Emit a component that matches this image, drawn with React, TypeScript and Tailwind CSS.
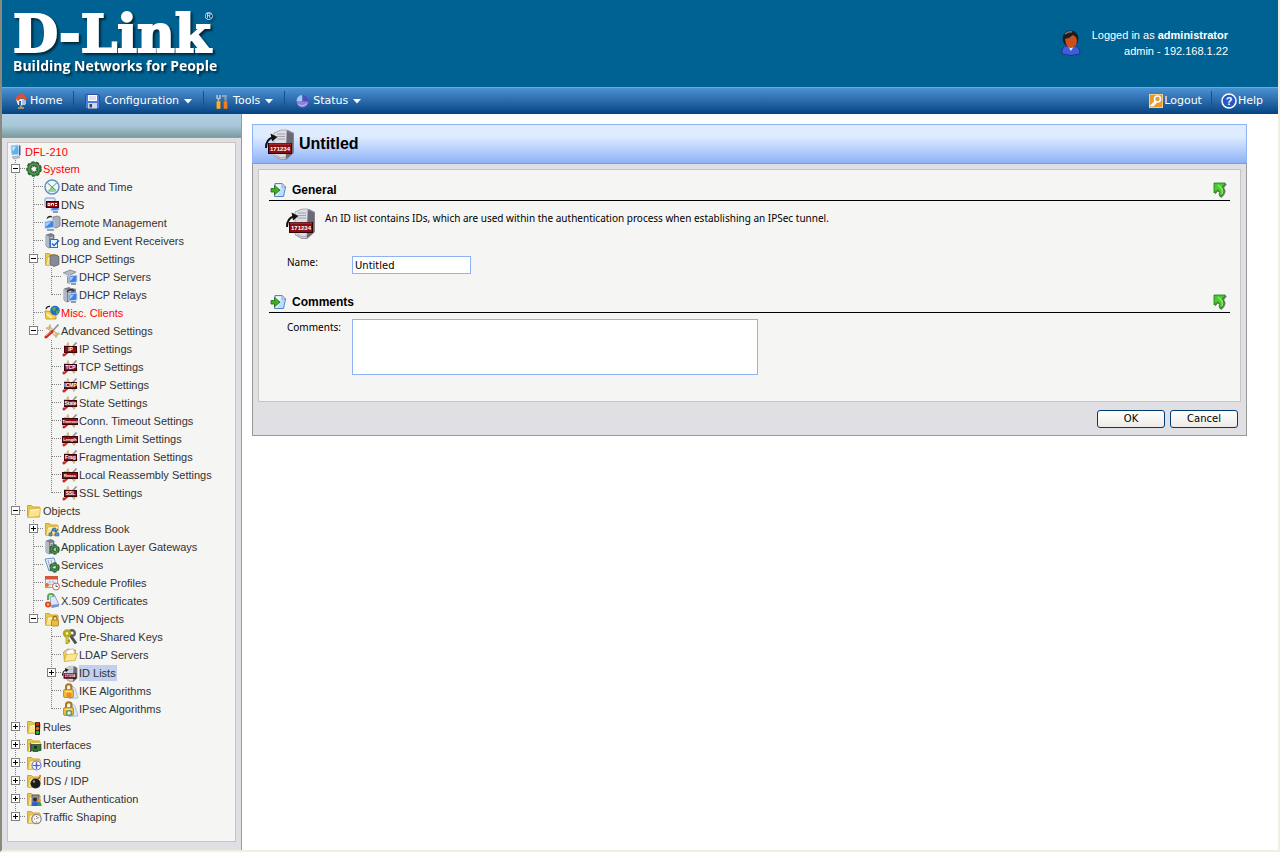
import { useState } from "react";
import type { ReactNode } from "react";

interface TreeNode {
  label: string;
  icon: ReactNode;
  alert?: boolean;
  selected?: boolean;
  closed?: boolean;
  children?: TreeNode[];
}

/* ---------- Icon parts ---------- */

const Folder = () => (
  <>
    <path d="M1.500 2.500h4l1.500 1.500h6.500v10h-12z" fill="#e8c64c" stroke="#cfa63a" />
    <path d="M2 14.500l1.500-8.500 11-1-1 8.500z" fill="#fbe58c" stroke="#d9ae3c" strokeWidth=".7" />
    <path d="M4 7.500l9-1" stroke="#fff8cf" />
  </>
);

const Server = () => (
  <>
    <path d="M2 2l5-1.500 3 1.500v11l-5 2-3-2z" fill="#7d8593" stroke="#4f5665" strokeWidth=".6" />
    <path d="M2 2l3 1.500v11.500l-3-2z" fill="#b3b9c4" />
    <path d="M6 5l3-1M6 7l3-1" stroke="#dfe3ea" strokeWidth=".8" />
  </>
);

const Monitor = () => (
  <>
    <path d="M7 7l8-1v7l-8 1z" fill="#3f7fe0" stroke="#c8d8f2" />
    <path d="M8 8l4-.5-3 4h-1z" fill="#9cc8ff" />
    <path d="M9 15h5" stroke="#6f7c92" strokeWidth="1.500" />
  </>
);

const Gear = ({ cx, cy, r, width }: { cx: number; cy: number; r: number; width: number }) => (
  <>
    <circle cx={cx} cy={cy} r={r} stroke="#2b6330" strokeWidth={width + 1.6} strokeDasharray="2.2 1.300" />
    <circle cx={cx} cy={cy} r={r} stroke="#2f6d34" strokeWidth={width} />
    <circle cx={cx} cy={cy} r={r} stroke="#5f9a5f" strokeWidth={width / 3} />
  </>
);

const WrenchAndDriver = () => (
  <>
    <path d="M4.500 4l8.500 9" stroke="#a9a18a" strokeWidth="3.600" />
    <path d="M4.500 4l8.500 9" stroke="#ecdfb0" strokeWidth="2.400" />
    <path d="M2 5l3.500.5.500-4M15.500 11l-3-.500-.500 4" stroke="#cdbb7a" strokeWidth="2" />
    <path d="M14.500 1.500l-6 6.500" stroke="#8f929c" strokeWidth="1.800" />
    <path d="M8 8.500l-6 5.500" stroke="#d3261b" strokeWidth="3" strokeLinecap="round" />
    <path d="M7 8.500l-5 4.500" stroke="#f58a7a" />
  </>
);

const Lock = () => (
  <>
    <path d="M9 2l4 3 3 10-9 .5z" fill="#dbe9f8" stroke="#8fa6c4" strokeWidth=".6" />
    <path d="M4 7v-3a2.500 2.500 0 0 1 5.500 0v3" stroke="#a9761b" strokeWidth="2" />
    <rect x="1.500" y="6.500" width="10" height="8" rx="1.500" fill="#edbb42" stroke="#a9761b" strokeWidth=".7" />
    <path d="M3.500 8.500h6" stroke="#ffeaa0" />
  </>
);

const Icon = ({ children }: { children: ReactNode }) => (
  <svg width="17" height="16" viewBox="0 0 17 16" fill="none" className="shrink-0" aria-hidden="true">
    {children}
  </svg>
);

const PlateIcon = ({ text, wide = false }: { text: string; wide?: boolean }) => (
  <Icon>
    <WrenchAndDriver />
    <rect
      x={wide ? 0.5 : 2.5}
      y="5.500"
      width={wide ? 15 : 12}
      height="6"
      fill="#960a10"
      stroke="#3b0507"
    />
    <text
      x={wide ? 8 : 8.5}
      y="10.300"
      textAnchor="middle"
      fontSize={wide ? 4 : 5}
      fontWeight="bold"
      fill="#fff"
      fontFamily="Liberation Sans, sans-serif"
    >
      {text}
    </text>
  </Icon>
);

const IdListIcon = ({ size = 32 }: { size?: number }) => (
  <svg width={size} height={size} viewBox="0 0 32 32" fill="none" className="shrink-0" aria-hidden="true">
    <path d="M9 5l7-3h7l6 3v20l-8 7h-5l-7-4z" fill="#85858f" />
    <path d="M9 5l7-3h6l-1 29-5 .5-7-4z" fill="#dcdce4" stroke="#9a9aa6" strokeWidth=".7" />
    <path d="M22 3l6 3v19l-7 6z" fill="#6a6a76" />
    <path d="M12 6h8M12 8.500h8M12 11h8" stroke="#a2a2b0" />
    <path d="M1 20q0-9 7-10.500" stroke="#111" strokeWidth="2" />
    <path d="M5.500 5.500l7 3.500-5.500 4.500z" fill="#111" />
    <rect x="3.500" y="15.500" width="23" height="10" fill="#8b0d10" stroke="#2d0304" />
    <path d="M4 16h22" stroke="#c4504f" strokeWidth=".8" />
    <text
      x="15"
      y="23"
      textAnchor="middle"
      fontSize="6"
      fontWeight="bold"
      fill="#fff"
      fontFamily="Liberation Sans, sans-serif"
    >
      171234
    </text>
    <path d="M11 27l5 3 5-1" stroke="#a6a6b2" />
  </svg>
);

const deviceIcon = (
  <svg width="14" height="16" viewBox="0 0 14 16" fill="none" aria-hidden="true">
    <path d="M3 2l7-1 1 9-7 1z" fill="#5cb1ef" stroke="#b3cbe6" />
    <path d="M4 3l4-.5-3 5z" fill="#c9ecff" />
    <path d="M11 1l1.500 1v9l-1.500 1z" fill="#4a5f93" />
    <path d="M4 13l6-1 2 1.500-6 1.500z" fill="#c4cfdf" stroke="#7b8ba8" strokeWidth=".6" />
  </svg>
);

const folderWith = (extra: ReactNode) => (
  <Icon>
    <Folder />
    {extra}
  </Icon>
);

const gearIcon = (
  <Icon>
    <Gear cx={8} cy={8} r={5} width={4} />
  </Icon>
);

const clockIcon = (
  <Icon>
    <circle cx="8" cy="8" r="7" fill="#eef7f4" stroke="#5f93c4" strokeWidth="1.500" />
    <path d="M8 8l-4 5h8z" fill="#9ad68f" />
    <path d="M3.500 4l4.500 4 4 3.500" stroke="#3f78b4" />
    <path d="M12.500 4l-8 8" stroke="#5d9a5c" />
  </Icon>
);

const dnsIcon = (
  <Icon>
    <rect x="1" y="1" width="10" height="9" rx="1" fill="#e2ecfa" stroke="#7796c6" />
    <Monitor />
    <rect x="2.500" y="4.500" width="12" height="6" fill="#8e0f12" stroke="#3b0507" />
    <path d="M4 6.500h2v2h-2zM7.500 8.500v-2h2v2M11 6.500h2M11 8.500h2" stroke="#fff" />
  </Icon>
);

const remoteIcon = (
  <Icon>
    <path d="M9 2l4-1 3 1v9l-4 2-3-1z" fill="#a9afbc" stroke="#6b7282" strokeWidth=".7" />
    <path d="M1 6.500l9-1v7l-9 1z" fill="#3f86e4" stroke="#c3d5ef" />
    <path d="M2 7.500l5-.5-4 4h-1z" fill="#a8d1ff" />
    <path d="M3 3.500q2-3 5-1.500" stroke="#222" strokeWidth="1.300" />
    <path d="M3 15h7" stroke="#7d899e" strokeWidth="1.500" />
  </Icon>
);

const logIcon = (
  <Icon>
    <Server />
    <rect x="6.500" y="6.500" width="7" height="8" fill="#e9f3ff" stroke="#3471c4" />
    <path d="M8 10.500l2 2 5-5" stroke="#2468c8" strokeWidth="1.500" />
  </Icon>
);

const dhcpServersIcon = (
  <Icon>
    <path d="M1 4l7-3 6 2-7 4z" fill="#b7b9bf" stroke="#6f7279" strokeWidth=".7" />
    <path d="M1 4l6 3v2l-6-3z" fill="#e6e7ea" />
    <path d="M5 7v7l3 1v-7z" fill="#8d95a3" />
    <Monitor />
  </Icon>
);

const dhcpRelaysIcon = (
  <Icon>
    <Server />
    <path d="M10 1l4 1v6l-4-1z" fill="#777e8d" />
    <path d="M5 5q3-4 7-1" stroke="#222" strokeWidth="1.300" />
    <Monitor />
  </Icon>
);

const miscIcon = (
  <Icon>
    <path d="M1 6h4l1 1h6v7h-10z" fill="#f6cf45" stroke="#b88a1c" strokeWidth=".8" />
    <circle cx="11" cy="5.500" r="4.800" fill="#2a6cc9" />
    <path d="M8 3q3-2 4 0l-1 3-2 0zM12 6l3-1-1 4-2 0z" fill="#55ab4c" />
    <path d="M2 4q1-3 4-2.500" stroke="#222" strokeWidth="1.300" />
    <path d="M3 9l5 4" stroke="#fff0a8" strokeWidth="2" />
  </Icon>
);

const gatewayIcon = (
  <Icon>
    <Server />
    <Gear cx={10.5} cy={10.5} r={3.2} width={2.5} />
  </Icon>
);

const servicesIcon = (
  <Icon>
    <path d="M1 2l9-1 3 10-8 3z" fill="#e5f0fb" stroke="#6a93c8" />
    <path d="M4 3l2 8M7 3l2 7" stroke="#9a9fd0" />
    <Gear cx={10.5} cy={10.5} r={3.2} width={2.5} />
  </Icon>
);

const scheduleIcon = (
  <Icon>
    <rect x="1.500" y="1.500" width="12" height="11" fill="#f6f8fc" stroke="#8ea4c8" />
    <rect x="1" y="1" width="13" height="3.500" fill="#d7553b" />
    <path d="M3 7h9M3 9.500h9M6 5v7M9 5v7" stroke="#a7b7d4" strokeWidth=".8" />
    <circle cx="3" cy="10" r="2" fill="#e8701f" />
    <circle cx="12" cy="11.500" r="3.500" fill="#fff" stroke="#d35f35" />
    <path d="M12 9.500v2h2" stroke="#444" strokeWidth=".8" />
  </Icon>
);

const certificateIcon = (
  <Icon>
    <path d="M4 7v-3a3 3 0 0 1 6 0v4" stroke="#56ad48" strokeWidth="2" />
    <path d="M6 4l5-1 4 9-8 2z" fill="#dfe7fa" stroke="#7a8fc0" strokeWidth=".8" />
    <path d="M7 12l8-1v2.500l-7 1.500z" fill="#7f92c9" />
    <circle cx="4" cy="11.500" r="3" fill="#d9482b" />
    <circle cx="4" cy="11.500" r="1.200" fill="#f7c24d" />
  </Icon>
);

const keysIcon = (
  <Icon>
    <path d="M8 6l6 8.500" stroke="#4c4f4a" strokeWidth="3" />
    <circle cx="10" cy="4" r="2.800" stroke="#60635c" strokeWidth="2.400" />
    <circle cx="5" cy="4.500" r="2.800" fill="#f5ee9f" stroke="#b1a91d" strokeWidth="2.800" />
    <path d="M5 7v8M5 12h3" stroke="#a59c17" strokeWidth="2.800" />
    <path d="M5 7v7" stroke="#e3da47" strokeWidth="1.200" />
  </Icon>
);

const ldapIcon = (
  <Icon>
    <path d="M1.500 5l4-3 8 1v9l-11 2z" fill="#f3cd58" stroke="#bf9630" strokeWidth=".8" />
    <path d="M4 4l7-2.500 2 6-8 3z" fill="#fff" stroke="#a8b7cc" strokeWidth=".7" />
    <path d="M2 14.500l2.500-7 11-1-2.500 7z" fill="#fce98e" stroke="#d0a63c" strokeWidth=".7" />
  </Icon>
);

/* ---------- Tree data ---------- */

const treeNodes: TreeNode[] = [
  {
    label: "System",
    icon: gearIcon,
    alert: true,
    children: [
      { label: "Date and Time", icon: clockIcon },
      { label: "DNS", icon: dnsIcon },
      { label: "Remote Management", icon: remoteIcon },
      { label: "Log and Event Receivers", icon: logIcon },
      {
        label: "DHCP Settings",
        icon: folderWith(<path d="M6 4.500l4-1 5 2v8l-5 2-4-2z" fill="#868a94" stroke="#4d525e" strokeWidth=".6" />),
        children: [
          { label: "DHCP Servers", icon: dhcpServersIcon },
          { label: "DHCP Relays", icon: dhcpRelaysIcon },
        ],
      },
      { label: "Misc. Clients", icon: miscIcon, alert: true },
      {
        label: "Advanced Settings",
        icon: (
          <Icon>
            <WrenchAndDriver />
          </Icon>
        ),
        children: [
          { label: "IP Settings", icon: <PlateIcon text="IP" /> },
          { label: "TCP Settings", icon: <PlateIcon text="TCP" /> },
          { label: "ICMP Settings", icon: <PlateIcon text="ICMP" /> },
          { label: "State Settings", icon: <PlateIcon text="State" /> },
          { label: "Conn. Timeout Settings", icon: <PlateIcon text="Timeout" wide /> },
          { label: "Length Limit Settings", icon: <PlateIcon text="Length" wide /> },
          { label: "Fragmentation Settings", icon: <PlateIcon text="Frag" /> },
          { label: "Local Reassembly Settings", icon: <PlateIcon text="Reass" wide /> },
          { label: "SSL Settings", icon: <PlateIcon text="SSL" /> },
        ],
      },
    ],
  },
  {
    label: "Objects",
    icon: folderWith(null),
    children: [
      {
        label: "Address Book",
        icon: folderWith(
          <>
            <path d="M6 14l3-6 3 3 2-3" stroke="#2c6fb8" strokeWidth="1.300" />
            <path d="M5 12h3v3h-3zM11 12h4v3h-4zM9 7h3v3h-3z" fill="#4f9be0" stroke="#2a527f" strokeWidth=".5" />
          </>
        ),
        closed: true,
        children: [],
      },
      { label: "Application Layer Gateways", icon: gatewayIcon },
      { label: "Services", icon: servicesIcon },
      { label: "Schedule Profiles", icon: scheduleIcon },
      { label: "X.509 Certificates", icon: certificateIcon },
      {
        label: "VPN Objects",
        icon: folderWith(
          <>
            <path d="M9 9v-1.500a2 2 0 0 1 4 0v1.500" stroke="#96701c" strokeWidth="1.300" />
            <rect x="7.500" y="9" width="7" height="6" rx="1" fill="#efbd3e" stroke="#96701c" strokeWidth=".7" />
          </>
        ),
        children: [
          { label: "Pre-Shared Keys", icon: keysIcon },
          { label: "LDAP Servers", icon: ldapIcon },
          {
            label: "ID Lists",
            icon: <IdListIcon size={17} />,
            selected: true,
            closed: true,
            children: [],
          },
          {
            label: "IKE Algorithms",
            icon: (
              <Icon>
                <Lock />
                <circle cx="7" cy="12" r="2.500" fill="#f08a1f" />
              </Icon>
            ),
          },
          {
            label: "IPsec Algorithms",
            icon: (
              <Icon>
                <Lock />
                <circle cx="7" cy="12" r="2.500" fill="#e5f3e2" stroke="#5d9e70" strokeWidth="1.500" />
              </Icon>
            ),
          },
        ],
      },
    ],
  },
  {
    label: "Rules",
    icon: folderWith(
      <>
        <rect x="9" y="3" width="5" height="13" rx="1" fill="#222" />
        <circle cx="11.500" cy="5" r="1.700" fill="#e02a1d" />
        <circle cx="11.500" cy="9.500" r="1.700" fill="#d4741a" />
        <circle cx="11.500" cy="13.500" r="1.700" fill="#28b52c" />
      </>
    ),
    closed: true,
    children: [],
  },
  {
    label: "Interfaces",
    icon: folderWith(
      <>
        <rect x="5" y="7.500" width="10" height="6" fill="#2e7a3c" stroke="#1b4724" strokeWidth=".7" />
        <path d="M4.500 6v9M7 14.500h5" stroke="#555" />
        <path d="M8 9h3v2.500h-3z" fill="#1d2b20" />
      </>
    ),
    closed: true,
    children: [],
  },
  {
    label: "Routing",
    icon: folderWith(
      <>
        <circle cx="10.500" cy="10.500" r="4.500" fill="#eef0ff" stroke="#7280cf" strokeWidth="1.200" />
        <path d="M10.500 7v7M7 10.500h7" stroke="#5361bd" strokeWidth="1.200" />
        <circle cx="10.500" cy="10.500" r="1.200" fill="#5361bd" />
      </>
    ),
    closed: true,
    children: [],
  },
  {
    label: "IDS / IDP",
    icon: folderWith(
      <>
        <circle cx="9.500" cy="10.500" r="5" fill="#1c1c1c" />
        <circle cx="8" cy="8.500" r="1.200" fill="#8f8f8f" />
        <path d="M12 6.500l2-3" stroke="#7a5c35" strokeWidth="1.300" />
        <circle cx="14" cy="3" r="1.200" fill="#f27a3a" />
      </>
    ),
    closed: true,
    children: [],
  },
  {
    label: "User Authentication",
    icon: folderWith(
      <>
        <rect x="6" y="4" width="7" height="9" fill="#8791a5" stroke="#48536b" strokeWidth=".7" />
        <circle cx="9" cy="8.500" r="2" fill="#3b241c" />
        <path d="M5.500 15q0-4.500 3.500-4.500t3.500 4.500z" fill="#2c5fd0" />
        <circle cx="13.500" cy="9.500" r="1.500" fill="#e69a3b" />
        <path d="M11.500 15q0-4 2-4t2 4z" fill="#3a9a45" />
      </>
    ),
    closed: true,
    children: [],
  },
  {
    label: "Traffic Shaping",
    icon: folderWith(
      <>
        <circle cx="10.500" cy="10" r="4.700" fill="#f5f5f5" stroke="#8d8d8d" strokeWidth="1.300" />
        <path d="M10.500 10l2-2" stroke="#c23a2a" />
        <path d="M8 10h1M10.500 7v1M10.500 12.500v1" stroke="#555" strokeWidth=".8" />
      </>
    ),
    closed: true,
    children: [],
  },
];

/* ---------- Tree ---------- */

const Rail = ({ line }: { line: boolean }) => (
  <svg width="18" height="18" className="shrink-0" aria-hidden="true">
    {line && <path d="M7.500 0v18" stroke="#808080" strokeDasharray="1 1" />}
  </svg>
);

const Joint = ({ last, box, open }: { last: boolean; box: boolean; open: boolean }) => (
  <svg width="18" height="18" className="block shrink-0" fill="none" aria-hidden="true">
    <path d={last ? "M7.500 0v9" : "M7.500 0v18"} stroke="#808080" strokeDasharray="1 1" />
    <path d="M8 8.500h10" stroke="#808080" strokeDasharray="1 1" />
    {box && (
      <>
        <rect x="3.500" y="4.500" width="8" height="8" fill="#fff" stroke="#808080" />
        <path d={open ? "M5 8.500h5" : "M5 8.500h5M7.500 6v5"} stroke="#000" />
      </>
    )}
  </svg>
);

function TreeRow({ node, rails, last }: { node: TreeNode; rails: boolean[]; last: boolean }) {
  const [open, setOpen] = useState(!node.closed);

  return (
    <li>
      <div className="flex h-[18px] items-center">
        {rails.map((line, index) => (
          <Rail key={index} line={line} />
        ))}
        {node.children ? (
          <button
            type="button"
            className="shrink-0"
            aria-label={`${open ? "Collapse" : "Expand"} ${node.label}`}
            onClick={() => setOpen(!open)}
          >
            <Joint last={last} box open={open} />
          </button>
        ) : (
          <Joint last={last} box={false} open={false} />
        )}
        {node.icon}
        <a
          href="#"
          className={`whitespace-nowrap leading-4 ${node.selected ? "bg-[#c1d0ee] pr-px" : ""} ${
            node.alert ? "text-[#ff0000]" : "text-[#333333]"
          }`}
        >
          {node.label}
        </a>
      </div>
      {open && node.children && node.children.length > 0 && (
        <ul>
          {node.children.map((child, index) => (
            <TreeRow
              key={child.label}
              node={child}
              rails={[...rails, !last]}
              last={index === node.children!.length - 1}
            />
          ))}
        </ul>
      )}
    </li>
  );
}

function Sidebar() {
  return (
    <aside className="flex w-60 shrink-0 flex-col border-r border-[#999999] bg-[#e0dfe4]">
      <div className="h-6 border-b border-[#999999] bg-linear-to-b from-[#b1cfe3] via-[#a9c8d8] to-[#7c9ca0]" />
      <nav
        className="mx-[5px] mt-1 mb-2 flex-1 border border-[#c6c6be] bg-[#f5f5f3] font-['Liberation_Sans',Arial,sans-serif] text-[11px]"
        aria-label="Device tree"
      >
        <div className="flex h-[17px] items-end gap-[3px]">
          {deviceIcon}
          <a href="#" className="leading-4 text-[#ff0000]">
            DFL-210
          </a>
        </div>
        <ul>
          {treeNodes.map((node, index) => (
            <TreeRow key={node.label} node={node} rails={[]} last={index === treeNodes.length - 1} />
          ))}
        </ul>
      </nav>
    </aside>
  );
}

/* ---------- Header and menu bar ---------- */

function Header() {
  return (
    <header className="flex h-[87px] items-start justify-between bg-[#006293] pr-[50px] pl-[11px] text-white">
      <div className="pt-[10px] drop-shadow-[2px_2px_1px_rgba(0,0,0,0.6)]">
        <div className="flex h-12 items-start font-['DejaVu_Serif',serif]">
          <span className="text-[52px] leading-12 font-bold [-webkit-text-stroke:2px_white]">D-Link</span>
          <span className="-ml-[6px] font-['Liberation_Sans',Arial,sans-serif] text-[11px] leading-3">®</span>
        </div>
        <div className="font-['Open_Sans',sans-serif] text-[14px] leading-4 font-bold whitespace-nowrap">
          Building Networks for People
        </div>
      </div>
      <div className="flex items-center gap-[7px] pt-[27px] font-['Liberation_Sans',Arial,sans-serif] text-[11px]">
        <svg width="20" height="26" viewBox="0 0 20 26" fill="none" className="mr-1" aria-hidden="true">
          <path d="M1 24q-1-8 5-8h7q6 0 6 8-9 3-18 0z" fill="#3b5fd6" stroke="#1d3190" />
          <path d="M7 16l3 5 3-5z" fill="#e8eeff" />
          <circle cx="9.500" cy="8.500" r="8" fill="#1d1d1f" />
          <path d="M4 9q5-1 8-4 4 2 4 6-1 7-6 7t-6-9z" fill="#c8501c" />
          <path d="M4 4q4-3 7-2" stroke="#77777c" strokeWidth="1.500" />
        </svg>
        <div className="text-right leading-4">
          <p>
            Logged in as <b>administrator</b>
          </p>
          <p>admin - 192.168.1.22</p>
        </div>
      </div>
    </header>
  );
}

const Divider = () => <span className="mt-[3px] h-[14px] w-px self-start bg-[#07549a]" />;

const Caret = () => (
  <svg width="8" height="5" viewBox="0 0 8 5" className="ml-px" aria-hidden="true">
    <path d="M0 0h8l-4 4.500z" fill="#fff" />
  </svg>
);

function MenuBar() {
  return (
    <nav className="flex h-[27px] items-center justify-between border-t border-[#8aa3b5] bg-linear-to-b from-[#4b92d3] to-[#044482] pr-[15px] pl-3 font-['DejaVu_Sans',Verdana,sans-serif] text-[11px] text-white">
      <div className="flex h-full items-center gap-[11px]">
        <a href="#" className="flex items-center gap-[2px]">
          <svg width="14" height="16" viewBox="0 0 14 16" fill="none" aria-hidden="true">
            <path d="M7 11v4M4 15h6" stroke="#c9a35a" strokeWidth="1.500" />
            <path d="M2 6h9v6h-7z" fill="#f4f6fb" />
            <path d="M8 6l4 1v4l-4 1.500z" fill="#a9c3e6" />
            <path d="M1 5l4-3.500 4-1 4 5.500-2 1.500-3-3-4 3.500z" fill="#e0512a" />
            <path d="M5 8h2v4h-2z" fill="#2f6db5" />
          </svg>
          Home
        </a>
        <Divider />
        <button type="button" className="flex items-center gap-1">
          <svg width="15" height="15" viewBox="0 0 15 15" fill="none" aria-hidden="true">
            <rect x=".5" y=".5" width="14" height="14" rx="1" fill="#4a7fe0" stroke="#2a4da8" />
            <rect x="3" y="1" width="9" height="6" fill="#fff" />
            <path d="M4 3h7M4 5h7" stroke="#b8c4dc" />
            <rect x="3" y="9" width="9" height="5.500" fill="#cfd6e6" />
            <rect x="4.500" y="10" width="2.500" height="3.500" fill="#31456f" />
          </svg>
          Configuration
          <Caret />
        </button>
        <Divider />
        <button type="button" className="flex items-center gap-1">
          <svg width="14" height="15" viewBox="0 0 14 15" fill="none" aria-hidden="true">
            <path d="M2 1v3l1.500 1 1.500-1v-3M3.500 5v4" stroke="#b9c9d9" strokeWidth="1.500" />
            <path d="M7 2h5M10.500 2v7" stroke="#8fa3b6" strokeWidth="2" />
            <rect x="1.500" y="7" width="4" height="8" rx="1" fill="#f0b13a" stroke="#a9701d" strokeWidth=".5" />
            <rect x="8.500" y="7" width="4" height="8" rx="1" fill="#ef7d2a" stroke="#9c4a17" strokeWidth=".5" />
          </svg>
          Tools
          <Caret />
        </button>
        <Divider />
        <button type="button" className="flex items-center gap-1">
          <svg width="13" height="14" viewBox="0 0 13 14" fill="none" aria-hidden="true">
            <circle cx="6.500" cy="7.500" r="6" fill="#8c83dd" stroke="#5c55b8" />
            <path d="M6.500 7.500v-6a6 6 0 0 1 6 6z" fill="#4b4fc0" />
            <path d="M6 7v-6a6 6 0 0 0-5.500 6z" fill="#8fd0f5" />
            <path d="M2 10q4 4 9-.5" stroke="#c8c2f5" />
          </svg>
          Status
          <Caret />
        </button>
      </div>
      <div className="flex h-full items-center gap-[9px]">
        <a href="#" className="flex items-center gap-px">
          <svg width="14" height="14" viewBox="0 0 14 14" fill="none" aria-hidden="true">
            <rect x=".5" y=".5" width="13" height="13" fill="#e79a30" stroke="#f7cf82" />
            <circle cx="8.500" cy="5" r="3" stroke="#fff" strokeWidth="1.500" />
            <path d="M6.500 7l-4.500 4.500h2.500l3-3.500" stroke="#fff" strokeWidth="1.400" />
          </svg>
          Logout
        </a>
        <Divider />
        <a href="#" className="flex items-center gap-px">
          <svg width="16" height="16" viewBox="0 0 16 16" aria-hidden="true">
            <circle cx="8" cy="8" r="7" fill="#2857c5" stroke="#fff" strokeWidth="1.500" />
            <text
              x="8"
              y="12"
              textAnchor="middle"
              fontSize="11"
              fontWeight="bold"
              fill="#fff"
              fontFamily="Liberation Sans, sans-serif"
            >
              ?
            </text>
          </svg>
          Help
        </a>
      </div>
    </nav>
  );
}

/* ---------- Form ---------- */

function SectionHeader({ title }: { title: string }) {
  return (
    <div className="flex h-5 items-center gap-[5px] border-b border-black pr-[3px] pb-[2px] pl-px">
      <svg width="17" height="16" viewBox="0 0 17 16" fill="none" aria-hidden="true">
        <path d="M5 1.500h7l3.500 3.500-2 9.500h-9z" fill="#bfdcfa" stroke="#4f86cc" />
        <path d="M6 2.500h6l-5 11h-2z" fill="#eef7ff" />
        <path d="M12 1.500v3.500h3.500z" fill="#fff" stroke="#4f86cc" strokeWidth=".7" />
        <path d="M1 6.500h3.500v-3l5.500 4.500-5.500 5v-3h-3.500z" fill="#3fb022" stroke="#1d6f12" strokeWidth=".8" />
      </svg>
      <h2 className="flex-1 font-['Liberation_Sans',Arial,sans-serif] text-[12px] font-bold">{title}</h2>
      <a href="#" aria-label="Back to top">
        <svg width="14" height="16" viewBox="0 0 14 16" fill="none" aria-hidden="true">
          <path d="M2 2h12l-3 4q4 4-2.500 10l-2.500-2q2-3-1-4.500l-3 3z" fill="#444" opacity=".7" />
          <path d="M1 1h11.500l-3 4q3.500 4-1.500 9.500l-2-1.500q2-3-1-5l-4 3z" fill="#4cc832" stroke="#1c7a16" strokeWidth=".8" />
          <path d="M5 3l4 4q1 3 0 5" stroke="#8bea5e" strokeWidth="1.500" />
        </svg>
      </a>
    </div>
  );
}

const DialogButton = ({ children, submit = false }: { children: ReactNode; submit?: boolean }) => (
  <button
    type={submit ? "submit" : "button"}
    className="h-[18px] w-[68px] rounded-[3px] border border-[#003c74] bg-linear-to-b from-white to-[#ecebe6] text-[10px] leading-4"
  >
    {children}
  </button>
);

function IdListForm() {
  return (
    <form className="w-full text-[10px]" onSubmit={(e) => e.preventDefault()}>
      <div className="flex h-[39px] items-center gap-[2px] border border-b-0 border-[#8fb2f5] bg-linear-to-b from-[#dfecff] from-30% to-[#8fb2f7] pl-3">
        <IdListIcon />
        <h1 className="font-['Liberation_Sans',Arial,sans-serif] text-[16px] font-bold">Untitled</h1>
      </div>
      <div className="border border-[#999999] bg-[#e0dfe4] p-[5px]">
        <div className="border border-[#c6c6be] bg-[#f5f5f3] px-[10px] pt-[11px] pb-[26px]">
          <SectionHeader title="General" />
          <div className="flex gap-[7px] pt-[6px] pl-[17px]">
            <IdListIcon />
            <p className="pt-[3px] font-['Noto_Sans',sans-serif] leading-4">
              An ID list contains IDs, which are used within the authentication process when establishing an IPSec
              tunnel.
            </p>
          </div>
          <div className="flex items-start pt-[17px] pl-[18px]">
            <label htmlFor="name" className="w-[65px] font-['Noto_Sans',sans-serif] leading-3">
              Name:
            </label>
            <input
              id="name"
              type="text"
              defaultValue="Untitled"
              className="h-[18px] w-[119px] border border-[#8fb2f5] bg-white px-[2px] outline-none"
            />
          </div>
          <div className="pt-[19px]">
            <SectionHeader title="Comments" />
          </div>
          <div className="flex items-start pt-[6px] pl-[18px]">
            <label htmlFor="comments" className="w-[65px] pt-[2px] font-['Noto_Sans',sans-serif] leading-3">
              Comments:
            </label>
            <textarea
              id="comments"
              className="h-14 w-[406px] resize-none border border-[#8fb2f5] bg-white px-[2px] outline-none"
            />
          </div>
        </div>
        <div className="flex justify-end gap-[5px] pt-2 pr-[3px] pb-[2px]">
          <DialogButton submit>OK</DialogButton>
          <DialogButton>Cancel</DialogButton>
        </div>
      </div>
    </form>
  );
}

export default function App() {
  return (
    <div className="flex min-h-screen flex-col border-r-2 border-b-2 border-l-2 border-r-[#f1efe2] border-b-[#f1efe2] border-l-[#8b897c] bg-white font-['DejaVu_Sans',Verdana,sans-serif] text-black">
      <Header />
      <MenuBar />
      <div className="flex flex-1">
        <Sidebar />
        <main className="flex-1 pt-[10px] pr-[31px] pl-[10px]">
          <IdListForm />
        </main>
      </div>
    </div>
  );
}
